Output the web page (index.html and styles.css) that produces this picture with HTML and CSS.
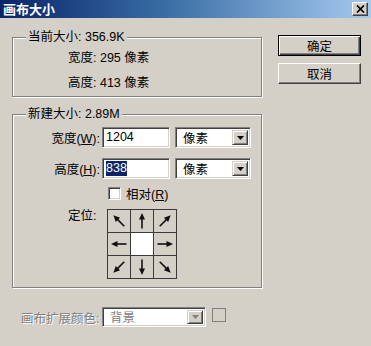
FILE: index.html
```html
<!DOCTYPE html>
<html lang="zh">
<head>
<meta charset="utf-8">
<title>画布大小</title>
<link rel="stylesheet" href="styles.css">
</head>
<body>
<div class="window">
  <div class="titlebar">
    <span class="title">画布大小</span>
    <span class="close"><svg width="9" height="8" viewBox="0 0 9 8"><path d="M1 0.5L8 7.5M8 0.5L1 7.5" stroke="#000" stroke-width="1.7"/></svg></span>
  </div>
  <div class="content">
    <div class="left">
      <fieldset class="group g1">
        <legend>当前大小: 356.9K</legend>
        <div class="info">宽度: 295 像素</div>
        <div class="info">高度: 413 像素</div>
      </fieldset>
      <fieldset class="group g2">
        <legend>新建大小: 2.89M</legend>
        <div class="form-row">
          <span class="flabel">宽度(<u>W</u>):</span>
          <div class="field input"><span>1204</span></div>
          <div class="field select"><span class="sel-text">像素</span><span class="drop"><svg width="7" height="4" viewBox="0 0 7 4"><polygon points="0,0 7,0 3.5,4" fill="#000"/></svg></span></div>
        </div>
        <div class="form-row r2">
          <span class="flabel">高度(<u>H</u>):</span>
          <div class="field input"><span class="selected">838</span></div>
          <div class="field select"><span class="sel-text">像素</span><span class="drop"><svg width="7" height="4" viewBox="0 0 7 4"><polygon points="0,0 7,0 3.5,4" fill="#000"/></svg></span></div>
        </div>
        <div class="check-row">
          <span class="checkbox"></span>
          <span class="check-label">相对(<u>R</u>)</span>
        </div>
        <div class="anchor-row">
          <span class="anchor-label">定位:</span>
          <div class="anchor-grid">
            <span class="cell"><svg viewBox="0 0 22 22"><g transform="rotate(-45 11 11)"><path d="M11 18.5V8" stroke="#111" stroke-width="1.6"/><polygon points="11,3 8,9.5 14,9.5" fill="#111"/></g></svg></span>
            <span class="cell"><svg viewBox="0 0 22 22"><g><path d="M11 18.5V8" stroke="#111" stroke-width="1.6"/><polygon points="11,3 8,9.5 14,9.5" fill="#111"/></g></svg></span>
            <span class="cell"><svg viewBox="0 0 22 22"><g transform="rotate(45 11 11)"><path d="M11 18.5V8" stroke="#111" stroke-width="1.6"/><polygon points="11,3 8,9.5 14,9.5" fill="#111"/></g></svg></span>
            <span class="cell"><svg viewBox="0 0 22 22"><g transform="rotate(-90 11 11)"><path d="M11 18.5V8" stroke="#111" stroke-width="1.6"/><polygon points="11,3 8,9.5 14,9.5" fill="#111"/></g></svg></span>
            <span class="cell center"></span>
            <span class="cell"><svg viewBox="0 0 22 22"><g transform="rotate(90 11 11)"><path d="M11 18.5V8" stroke="#111" stroke-width="1.6"/><polygon points="11,3 8,9.5 14,9.5" fill="#111"/></g></svg></span>
            <span class="cell"><svg viewBox="0 0 22 22"><g transform="rotate(-135 11 11)"><path d="M11 18.5V8" stroke="#111" stroke-width="1.6"/><polygon points="11,3 8,9.5 14,9.5" fill="#111"/></g></svg></span>
            <span class="cell"><svg viewBox="0 0 22 22"><g transform="rotate(180 11 11)"><path d="M11 18.5V8" stroke="#111" stroke-width="1.6"/><polygon points="11,3 8,9.5 14,9.5" fill="#111"/></g></svg></span>
            <span class="cell"><svg viewBox="0 0 22 22"><g transform="rotate(135 11 11)"><path d="M11 18.5V8" stroke="#111" stroke-width="1.6"/><polygon points="11,3 8,9.5 14,9.5" fill="#111"/></g></svg></span>
          </div>
        </div>
      </fieldset>
      <div class="ext-row">
        <span class="ext-label">画布扩展颜色:</span>
        <div class="field select ext-select"><span class="sel-text">背景</span><span class="drop"><svg width="7" height="4" viewBox="0 0 7 4"><polygon points="0,0 7,0 3.5,4" fill="#808080"/></svg></span></div>
        <span class="swatch"></span>
      </div>
    </div>
    <div class="buttons">
      <button class="btn default">确定</button>
      <button class="btn">取消</button>
    </div>
  </div>
</div>
</body>
</html>
```
FILE: styles.css
```css
* { box-sizing: border-box; }
html, body { margin: 0; padding: 0; }
body {
  background: #d4d0c8;
  font-family: "Liberation Sans", "Noto Sans CJK SC", sans-serif;
  font-size: 12.5px;
  color: #000;
}
.window {
  width: 371px;
  height: 346px;
  background: #d4d0c8;
  overflow: hidden;
}
.titlebar {
  height: 18px;
  background: linear-gradient(to right, #0a246a 0%, #3a6ea5 45%, #a6caf0 100%);
  display: flex;
  align-items: center;
  justify-content: space-between;
  padding: 0 3px 0 3px;
}
.title {
  color: #fff;
  font-weight: bold;
  font-size: 13px;
  line-height: 18px;
  font-family: "Noto Sans CJK SC", sans-serif;
}
.close {
  width: 16px;
  height: 14px;
  background: #d4d0c8;
  border: 1px solid;
  border-color: #fff #404040 #404040 #fff;
  box-shadow: inset -1px -1px 0 #808080;
  display: flex;
  align-items: center;
  justify-content: center;
}
.content {
  display: flex;
  padding: 12px 0 0 12px;
}
.left {
  width: 250px;
  display: flex;
  flex-direction: column;
}
.group {
  margin: 0;
  padding: 0;
  border: 1px solid #808080;
  box-shadow: inset 1px 1px 0 #fff, 1px 1px 0 #fff;
  min-inline-size: 0;
}
.group legend {
  margin-left: 13px;
  padding: 0 2px;
  line-height: 14px;
  background: #d4d0c8;
}
.g1 { padding-top: 2px; }
.info {
  height: 25px;
  line-height: 25px;
  padding-left: 55px;
}
.g2 {
  margin-top: 10px;
  padding-top: 6px;
  padding-bottom: 8px;
}
.form-row {
  display: flex;
  align-items: center;
  height: 21px;
}
.form-row.r2 { margin-top: 10px; }
.flabel {
  width: 87px;
  text-align: right;
  margin-right: 2px;
}
.field {
  height: 21px;
  background: #fff;
  border: 1px solid;
  border-color: #808080 #fff #fff #808080;
  box-shadow: inset 1px 1px 0 #404040, inset -1px -1px 0 #d4d0c8;
}
.input {
  width: 68px;
  padding: 2px 3px;
  line-height: 15px;
}
.selected {
  background: #0a246a;
  color: #fff;
  display: inline-block;
  line-height: 15px;
}
.select {
  width: 76px;
  margin-left: 5px;
  display: flex;
  align-items: stretch;
  padding: 2px;
}
.sel-text {
  flex: 1;
  padding-left: 5px;
  line-height: 18px;
}
.drop {
  width: 16px;
  background: #d4d0c8;
  border: 1px solid;
  border-color: #d4d0c8 #404040 #404040 #d4d0c8;
  box-shadow: inset 1px 1px 0 #fff, inset -1px -1px 0 #808080;
  display: flex;
  align-items: center;
  justify-content: center;
}
.check-row {
  display: flex;
  align-items: center;
  margin-top: 8px;
  height: 13px;
  padding-left: 95px;
}
.checkbox {
  width: 13px;
  height: 13px;
  background: #fff;
  border: 1px solid;
  border-color: #808080 #fff #fff #808080;
  box-shadow: inset 1px 1px 0 #404040, inset -1px -1px 0 #d4d0c8;
  margin-right: 5px;
}
.anchor-row {
  display: flex;
  margin-top: 9px;
  padding-left: 55px;
}
.anchor-label {
  width: 39px;
  line-height: 14px;
}
.anchor-grid {
  width: 70px;
  height: 70px;
  display: grid;
  grid-template-columns: repeat(3, 22px);
  grid-template-rows: repeat(3, 22px);
  gap: 1px;
  padding: 1px;
  background: #3a3a3a;
}
.cell {
  background: #d4d0c8;
  display: block;
}
.cell svg { width: 22px; height: 22px; display: block; }
.cell.center { background: #fff; }
.ext-row {
  display: flex;
  align-items: center;
  margin-top: 19px;
  padding-left: 9px;
}
.ext-label {
  width: 81px;
  flex: none;
  color: #808080;
  text-shadow: 1px 1px 0 #fff;
}
.ext-select {
  width: 104px;
  height: 20px;
  margin-left: 0;
  color: #808080;
}
.ext-select .sel-text { line-height: 16px; }
.swatch {
  width: 14px;
  height: 14px;
  margin-left: 6px;
  border: 1px solid #808080;
  align-self: flex-start;
  margin-top: 1px;
}
.buttons {
  display: flex;
  flex-direction: column;
  margin-left: 16px;
  padding-top: 5px;
  gap: 7px;
}
.btn {
  width: 83px;
  height: 21px;
  padding: 0;
  font: inherit;
  color: #000;
  background: #d4d0c8;
  border: 1px solid;
  border-color: #fff #404040 #404040 #fff;
  box-shadow: inset -1px -1px 0 #808080;
}
.btn.default {
  border: 1px solid #000;
  box-shadow: inset 1px 1px 0 #fff, inset -1px -1px 0 #404040, inset -2px -2px 0 #808080;
}
```
